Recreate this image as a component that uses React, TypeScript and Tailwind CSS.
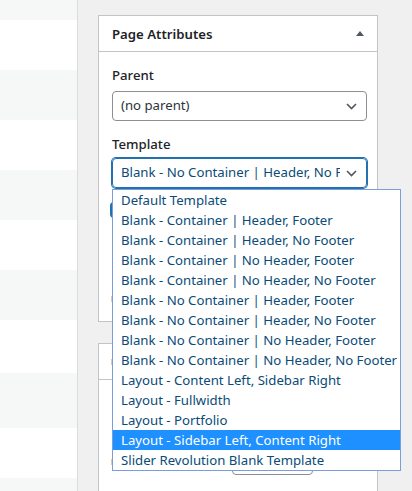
import { useState } from 'react'

const stripes = [
  { h: 'h-[20px]', bg: 'bg-[#f6f7f7]' },
  { h: 'h-[50px]', bg: 'bg-white' },
  { h: 'h-[50px]', bg: 'bg-[#f6f7f7]' },
  { h: 'h-[50px]', bg: 'bg-white' },
  { h: 'h-[50px]', bg: 'bg-[#f6f7f7]' },
  { h: 'h-[50px]', bg: 'bg-white' },
  { h: 'h-[50px]', bg: 'bg-[#f6f7f7]' },
  { h: 'h-[53px]', bg: 'bg-white' },
  { h: 'h-[55px]', bg: 'bg-[#f6f7f7]' },
  { h: 'h-[50px]', bg: 'bg-white' },
  { h: 'h-[50px]', bg: 'bg-[#f6f7f7]' },
]

const templates = [
  'Default Template',
  'Blank - Container | Header, Footer',
  'Blank - Container | Header, No Footer',
  'Blank - Container | No Header, Footer',
  'Blank - Container | No Header, No Footer',
  'Blank - No Container | Header, Footer',
  'Blank - No Container | Header, No Footer',
  'Blank - No Container | No Header, Footer',
  'Blank - No Container | No Header, No Footer',
  'Layout - Content Left, Sidebar Right',
  'Layout - Fullwidth',
  'Layout - Portfolio',
  'Layout - Sidebar Left, Content Right',
  'Slider Revolution Blank Template',
]

function Chevron() {
  return (
    <svg width="11" height="7" viewBox="0 0 11 7" className="shrink-0">
      <path d="M1 1l4.5 4.5L10 1" fill="none" stroke="#50575e" strokeWidth="1.6" />
    </svg>
  )
}

export default function App() {
  const [hovered, setHovered] = useState(12)

  return (
    <div className="flex h-[491px] overflow-hidden bg-[#f0f0f1] font-['Noto_Sans',sans-serif] text-[13.2px] text-[#1d2327]">
      {/* List column */}
      <div className="w-[78px] shrink-0 border-r border-[#dcdcde] flex flex-col">
        {stripes.map((s, i) => (
          <div key={i} className={`${s.h} ${s.bg} shrink-0`} />
        ))}
      </div>

      {/* Sidebar */}
      <div className="flex-1 pl-5 pt-[15px]">
        <div className="w-[280px] h-[307px] border border-[#c3c4c7] bg-white">
          <div className="h-[36px] border-b border-[#c3c4c7] flex items-center justify-between pl-[13px] pr-[13px]">
            <h2 className="font-semibold leading-5">Page Attributes</h2>
            <svg width="8" height="5" viewBox="0 0 8 5">
              <path d="M0 5L4 0l4 5z" fill="#50575e" />
            </svg>
          </div>

          <div className="pl-[13px] pr-[10px]">
            <p className="mt-[13px] leading-5 font-medium">Parent</p>
            <div className="mt-[6px] h-[30px] w-[255px] rounded border border-[#8c8f94] flex items-center justify-between pl-[8px] pr-[9px] text-[#2c3338]">
              <span>(no parent)</span>
              <Chevron />
            </div>

            <p className="mt-[13px] leading-5 font-medium">Template</p>
            <div className="relative mt-[4px]">
              <div className="h-[30px] w-[255px] rounded border border-[#2271b1] shadow-[0_0_0_1px_#2271b1] flex items-center justify-between pl-[8px] pr-[9px] text-[#0a4b78]">
                <span className="w-[219px] overflow-hidden whitespace-nowrap">
                  Blank - No Container | Header, No Footer
                </span>
                <Chevron />
              </div>

              {/* Open dropdown */}
              <ul className="absolute left-0 top-[31px] z-10 w-[289px] border border-[#7a9ed8] bg-white text-[#0a4b78]">
                {templates.map((t, i) => (
                  <li
                    key={t}
                    onMouseEnter={() => setHovered(i)}
                    className={`h-5 leading-5 pl-[8px] whitespace-nowrap ${
                      i === hovered ? 'bg-[#1e90ff] text-white' : ''
                    }`}
                  >
                    {t}
                  </li>
                ))}
              </ul>

              {/* Controls hidden under the dropdown */}
              <div className="ml-[-2px] mt-[14px] h-[16px] w-[60px] rounded-sm bg-[#2271b1]" />
              <div className="ml-[-1px] mt-[78px] h-[6px] w-[20px] bg-[#e0c9ad]" />
            </div>
          </div>
        </div>

        <div className="mt-[21px] w-[280px] h-[200px] border border-[#c3c4c7] bg-white">
          <div className="h-[36px] border-b border-[#c3c4c7] flex items-center pl-[12px]">
            <div className="h-[6px] w-[20px] bg-[#e0c9ad]" />
          </div>
          <div className="mt-[69px] h-[26px] flex items-center pl-[12px]">
            <div className="h-[6px] w-[20px] bg-[#e0c9ad]" />
            <div className="ml-[101px] h-[26px] w-[81px] rounded border border-[#8c8f94]" />
          </div>
        </div>
      </div>
    </div>
  )
}
